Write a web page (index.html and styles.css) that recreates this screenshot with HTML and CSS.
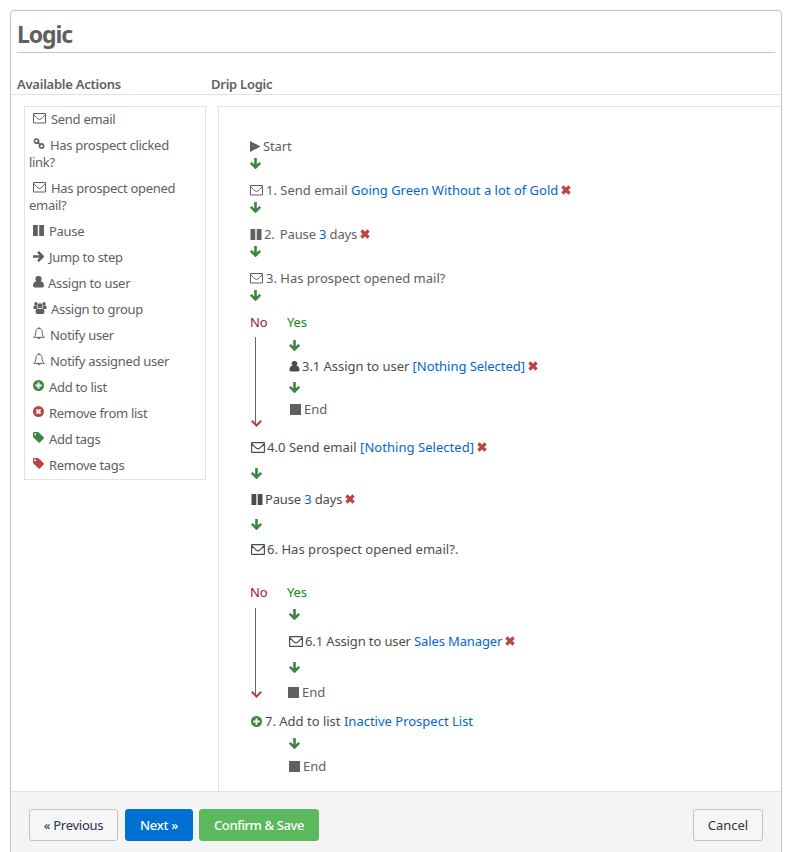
FILE: index.html
```html
<!DOCTYPE html>
<html lang="en">
<head>
<meta charset="utf-8">
<title>Logic</title>
<link rel="stylesheet" href="styles.css">
</head>
<body>
<svg class="sprite" aria-hidden="true">
  <symbol id="mail" viewBox="0 0 13 11"><path d="M.5.5h12v9.500H.5zM.8 1.500C2 3 4.900 6.500 6.500 6.500S11 3 12.200 1.500" fill="none" stroke="currentColor" stroke-width="1"/></symbol>
  <symbol id="mail2" viewBox="0 0 14 11"><path d="M1.100.6h11.800q.5 0 .5.500v8.800q0 .5-.5.500H1.100q-.5 0-.5-.5V1.100q0-.5.5-.5zM1 2l4.500 4.300q1.500 1.200 3 0L13 2" fill="none" stroke="currentColor" stroke-width="1.150"/></symbol>
  <symbol id="link" viewBox="0 0 12 12"><g fill="none" stroke="currentColor" stroke-width="1.700"><circle cx="3.300" cy="3.300" r="2.300"/><circle cx="8.700" cy="8.700" r="2.300"/><path d="M4 4l4 4"/></g></symbol>
  <symbol id="pause" viewBox="0 0 11 11"><path d="M0 0h4.800v11H0zM6.200 0H11v11H6.200z" fill="currentColor"/></symbol>
  <symbol id="right" viewBox="0 0 11 11"><path d="M0 5.500h9.300M5 .8l4.700 4.700L5 10.200" fill="none" stroke="currentColor" stroke-width="2.600"/></symbol>
  <symbol id="down" viewBox="0 0 11 11"><path d="M5.500 0v9.300M.8 4.800l4.700 4.700 4.700-4.700" fill="none" stroke="currentColor" stroke-width="2.600"/></symbol>
  <symbol id="user" viewBox="0 0 11 12"><path d="M5.500 0a2.900 2.900 0 0 1 2 5.200Q10.600 5.400 11 9.600 11 11.500 9.200 11.500H1.800Q0 11.500 0 9.600 .4 5.400 3.500 5.200A2.900 2.900 0 0 1 5.500 0z" fill="currentColor"/></symbol>
  <symbol id="group" viewBox="0 0 13 12"><g fill="currentColor"><circle cx="2.500" cy="1.800" r="1.700"/><circle cx="10.500" cy="1.800" r="1.700"/><circle cx="6.500" cy="3.700" r="2.500"/><path d="M0 6.500V5q0-1.600 1-1.500h2.300Q3.200 5 4 6L3 7H.8Q0 7 0 6.500zM13 6.500V5q0-1.600-1-1.500H9.700Q9.800 5 9 6l1 1h2.200q.8 0 .8-.5zM4.300 6.400q2.200 1.200 4.400 0Q11 6.600 11 10q0 2-1.800 2H3.800Q2 12 2 10 2 6.600 4.300 6.400z"/></g></symbol>
  <symbol id="bell" viewBox="0 0 12 13"><path d="M6 0v1.300M6 1.400C3.800 1.400 2.900 3 2.900 4.900 2.900 8 1.900 9.200.6 10.300h10.800C10.100 9.200 9.100 8 9.100 4.900 9.100 3 8.200 1.400 6 1.400zM4.800 10.500a1.200 1.300 0 0 0 2.400 0" fill="none" stroke="currentColor" stroke-width="1"/></symbol>
  <symbol id="plus" viewBox="0 0 11 11"><circle cx="5.500" cy="5.500" r="5.500" fill="currentColor"/><path d="M5.500 2.300v6.400M2.300 5.500h6.400" stroke="#fff" stroke-width="1.800"/></symbol>
  <symbol id="minus" viewBox="0 0 11 11"><circle cx="5.500" cy="5.500" r="5.500" fill="currentColor"/><path d="M3.500 3.500l4 4M7.500 3.500l-4 4" stroke="#fff" stroke-width="1.900"/></symbol>
  <symbol id="tag" viewBox="0 0 11 11"><path fill-rule="evenodd" d="M0 1Q0 0 1 0h3.600q.8 0 1.500.7l4.600 4.600q.6.600 0 1.200l-3.900 4q-.6.600-1.200 0L.7 5.700Q0 5 0 4.300zM2.200 1.300a.9.900 0 1 0 .01 0z" fill="currentColor"/></symbol>
  <symbol id="x" viewBox="0 0 10 10"><path d="M1.400 1.500l7.200 7M8.600 1.500l-7.200 7" stroke="currentColor" stroke-width="3.200"/></symbol>
  <symbol id="play" viewBox="0 0 11 11"><path d="M0 0l10.500 5.500L0 11z" fill="currentColor"/></symbol>
  <symbol id="stop" viewBox="0 0 11 11"><path d="M0 0h11v11H0z" fill="currentColor"/></symbol>
  <symbol id="tip" viewBox="0 0 11 7"><path d="M.8.800l4.700 4.700L10.200.800" fill="none" stroke="currentColor" stroke-width="2.200"/></symbol>
</svg>

<main class="panel">
  <h1>Logic</h1>
  <div class="heads"><h2>Available Actions</h2><h2>Drip Logic</h2></div>
  <div class="columns">
    <ul class="actions">
      <li><svg class="w13"><use href="#mail"/></svg>Send email</li>
      <li><svg class="w12 up"><use href="#link"/></svg>Has prospect clicked<br>link?</li>
      <li><svg class="w13"><use href="#mail"/></svg>Has prospect opened<br>email?</li>
      <li><svg class="w11"><use href="#pause"/></svg>Pause</li>
      <li><svg class="w11"><use href="#right"/></svg>Jump to step</li>
      <li><svg class="w11 tall"><use href="#user"/></svg>Assign to user</li>
      <li><svg class="w14 tall"><use href="#group"/></svg>Assign to group</li>
      <li><svg class="w12 tall"><use href="#bell"/></svg>Notify user</li>
      <li><svg class="w12 tall"><use href="#bell"/></svg>Notify assigned user</li>
      <li><svg class="w11 up green"><use href="#plus"/></svg>Add to list</li>
      <li><svg class="w11 up red"><use href="#minus"/></svg>Remove from list</li>
      <li><svg class="w11 up green"><use href="#tag"/></svg>Add tags</li>
      <li><svg class="w11 up red"><use href="#tag"/></svg>Remove tags</li>
    </ul>

    <section class="flow">
      <div class="row tight"><svg class="w11"><use href="#play"/></svg><span>Start</span></div>
      <div class="arrow"><svg><use href="#down"/></svg></div>
      <div class="row"><svg class="w13"><use href="#mail"/></svg><span>1. Send email <a>Going Green Without a lot of Gold</a></span><svg class="del"><use href="#x"/></svg></div>
      <div class="arrow"><svg><use href="#down"/></svg></div>
      <div class="row tight"><svg class="w12"><use href="#pause"/></svg><span>2. &thinsp;Pause <a>3</a> days</span><svg class="del"><use href="#x"/></svg></div>
      <div class="arrow"><svg><use href="#down"/></svg></div>
      <div class="row"><svg class="w13"><use href="#mail"/></svg><span>3. Has prospect opened mail?</span></div>
      <div class="arrow"><svg><use href="#down"/></svg></div>

      <div class="branch first">
        <div class="no"><span>No</span><i class="line"></i><svg class="tip"><use href="#tip"/></svg></div>
        <div class="yes">
          <span class="label">Yes</span>
          <div class="arrow"><svg><use href="#down"/></svg></div>
          <div class="row dark near"><svg class="w11"><use href="#user"/></svg><span>3.1 Assign to user <a>[Nothing Selected]</a></span><svg class="del"><use href="#x"/></svg></div>
          <div class="arrow"><svg><use href="#down"/></svg></div>
          <div class="row end"><svg class="w11"><use href="#stop"/></svg><span>End</span></div>
        </div>
      </div>

      <div class="lower">
        <div class="row dark near wide"><svg class="w14"><use href="#mail2"/></svg><span>4.0 Send email <a>[Nothing Selected]</a></span><svg class="del"><use href="#x"/></svg></div>
        <div class="arrow"><svg><use href="#down"/></svg></div>
        <div class="row dark tight"><svg class="w12"><use href="#pause"/></svg><span>Pause <a>3</a> days</span><svg class="del"><use href="#x"/></svg></div>
        <div class="arrow short"><svg><use href="#down"/></svg></div>
        <div class="row dark near wide"><svg class="w14"><use href="#mail2"/></svg><span>6. Has prospect opened email?.</span></div>
      </div>

      <div class="branch second">
        <div class="no"><span>No</span><i class="line"></i><svg class="tip"><use href="#tip"/></svg></div>
        <div class="yes">
          <span class="label">Yes</span>
          <div class="arrow"><svg><use href="#down"/></svg></div>
          <div class="row dark near snug"><svg class="w14"><use href="#mail2"/></svg><span>6.1 Assign to user <a>Sales Manager</a></span><svg class="del"><use href="#x"/></svg></div>
          <div class="arrow"><svg><use href="#down"/></svg></div>
          <div class="row end"><svg class="w11"><use href="#stop"/></svg><span>End</span></div>
        </div>
      </div>

      <div class="final">
        <div class="row dark"><svg class="w11 green"><use href="#plus"/></svg><span>7. Add to list <a>Inactive Prospect List</a></span></div>
        <div class="arrow"><svg><use href="#down"/></svg></div>
        <div class="row end"><svg class="w11"><use href="#stop"/></svg><span>End</span></div>
      </div>
    </section>
  </div>
  <footer>
    <button class="prev">« Previous</button>
    <button class="next">Next »</button>
    <button class="save">Confirm &amp; Save</button>
    <button class="cancel">Cancel</button>
  </footer>
</main>
</body>
</html>
```
FILE: styles.css
```css
* { box-sizing: border-box; }
body { margin: 0; height: 852px; overflow: hidden; padding: 10px 10px 0; background: #fff; color: #606060; font: 13px/17px "Noto Sans", "Open Sans", sans-serif; }
.sprite { display: none; }
svg { width: 11px; height: 11px; flex: none; overflow: visible; }
.w12 { width: 12px; }
.w13 { width: 13px; }
.w14 { width: 14px; }
.green { color: #3c8642; }
.red { color: #bb4442; }
.panel { width: 772px; height: 860px; border: 1px solid #c4c4c4; border-radius: 4px; }
h1 { margin: 0 6px; height: 42px; padding-top: 8px; font-size: 23px; font-weight: 700; line-height: 30px; letter-spacing: -1.1px; border-bottom: 1px solid #c4c4c4; }
.heads { display: grid; grid-template-columns: 194px 1fr; height: 42px; padding: 22px 6px 0; border-bottom: 1px solid #e2e2e2; }
h2 { margin: 0; font-size: 13px; font-weight: 600; line-height: 19px; letter-spacing: -.25px; }
.columns { display: flex; align-items: flex-start; height: 696px; padding: 11px 0 0 13px; }
.actions { width: 182px; height: 374px; margin: 0; padding: 0 0 0 4px; list-style: none; border: 1px solid #e2e2e2; letter-spacing: -.3px; }
li { padding: 4px 0 5px; white-space: nowrap; line-height: 17px; }
li svg { margin: -2px 5px 0 4px; vertical-align: 0; }
li svg.up { vertical-align: 1px; }
li svg.tall { height: 12px; margin-right: 4px; }
li svg.w12.tall { height: 13px; margin-right: 5px; }
.flow { flex: 1; align-self: stretch; margin-left: 12px; padding: 28px 0 0 31px; border: solid #e2e2e2; border-width: 1px 0 0 1px; }
.row { display: flex; align-items: center; height: 22px; gap: 3px; white-space: nowrap; }
.row .del { width: 10px; height: 10px; color: #bb4442; }
.row.tight { gap: 2px; letter-spacing: -.15px; }
.row.near { gap: 2px; }
.tight .del, .near .del { margin-left: 1px; }
.row.snug { letter-spacing: -.13px; }
.row.wide { letter-spacing: .04px; }
.dark { color: #4c4c4c; }
a { color: #0366d1; }
.arrow { display: flex; align-items: center; height: 12px; color: #3c8642; }
.flow > .arrow { margin-bottom: 10px; }
.branch { display: grid; grid-template-columns: 37px 1fr; }
.no { display: flex; flex-direction: column; color: #a0103c; }
.no span, .label { display: block; height: 22px; line-height: 22px; letter-spacing: -.2px; }
.label { color: #128a10; }
.line { width: 1px; margin: 4px 0 -5px 5px; background: #666; }
.tip { height: 7px; margin-left: 1px; color: #bb4442; }
.yes .arrow { height: 24px; padding-left: 2px; }
.yes .row { height: 18px; padding-left: 2px; }
.first .yes .near { letter-spacing: -.05px; }
.yes .end { height: 20px; padding-left: 3px; }
.first { height: 125px; }
.first .line { height: 88px; }
.lower, .final { padding-left: 1px; }
.lower .arrow { height: 30px; }
.lower .short { height: 28px; }
.second { height: 129px; margin-top: 21px; }
.second .no span, .second .label { height: 21px; }
.second .line { height: 88px; margin-top: 6px; }
.second .yes .row { height: 30px; }
.second .yes .arrow + .row + .arrow { height: 22px; }
.second .yes .end { height: 28px; padding-left: 1px; }
.final .arrow { height: 23px; padding-left: 38px; }
.final .end { padding-left: 38px; }
footer { display: flex; height: 80px; padding: 17px 18px; gap: 6px; background: #f4f4f4; border-top: 1px solid #e2e2e2; }
button { height: 32px; padding: 0; border: 1px solid #c3c3c3; border-radius: 3px; background: #f6f6f6; color: #333; font: 13px "Noto Sans", sans-serif; white-space: nowrap; }
.prev { width: 89px; margin-right: 1px; color: #263354; letter-spacing: -.25px; }
.next { width: 68px; border-color: #0070d2; background: #0070d2; color: #fff; font-weight: 500; letter-spacing: -.25px; }
.save { width: 120px; border-color: #5cb85c; background: #5cb85c; color: #fff; font-weight: 500; letter-spacing: -.4px; }
.cancel { width: 70px; margin-left: auto; }
```
